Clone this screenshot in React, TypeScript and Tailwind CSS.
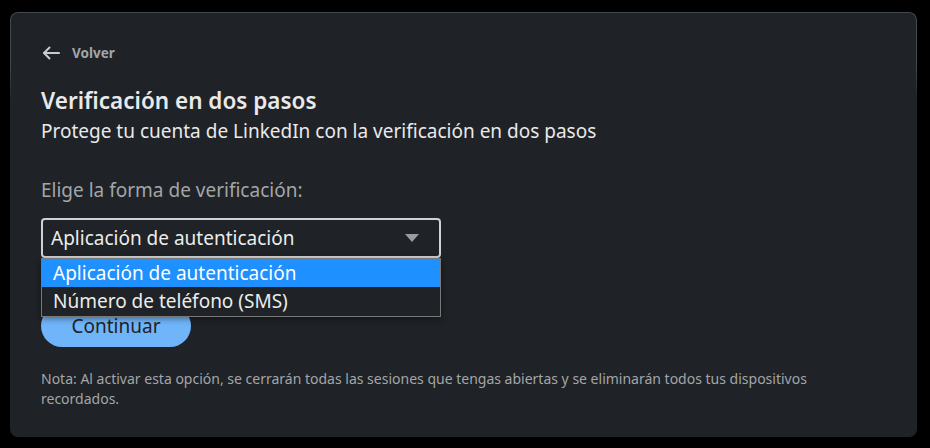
import React from "react";

export default function App() {
  return (
    <div className="w-[930px] h-[448px] bg-black pt-[12px] pl-[10px]" style={{ fontFamily: '"Noto Sans", "Open Sans", sans-serif' }}>
      <div className="relative w-[907px] h-[425px] bg-[#1f2226] rounded-[8px] pl-[31px] pr-[31px] pt-[31px]">
        <div className="pointer-events-none absolute inset-x-0 top-0 h-[90px] rounded-t-[8px] border-t border-x border-[#45484c] [mask-image:linear-gradient(to_bottom,black_60%,transparent)]" />
        <div className="flex items-center h-[20px] gap-[12px]">
          <svg width="18" height="14" viewBox="0 0 18 14" fill="none" stroke="#c9ccce" strokeWidth="2" strokeLinecap="round" strokeLinejoin="round" className="ml-[1px]">
            <path d="M17 7H2" />
            <path d="M7.5 1.5L2 7l5.5 5.5" />
          </svg>
          <span className="text-[13.5px] font-bold text-[#a3a6a9] leading-[20px]">Volver</span>
        </div>
        <h1 className="mt-[23px] text-[22.5px] font-semibold leading-[30px] text-[#e9e9ea]">Verificación en dos pasos</h1>
        <p className="mt-[2px] text-[19px] leading-[26px] text-[#e9e9ea]">Protege tu cuenta de LinkedIn con la verificación en dos pasos</p>
        <p className="mt-[33px] text-[19px] leading-[26px] text-[#a3a6a9]">Elige la forma de verificación:</p>
        <div className="relative mt-[15px] w-[400px]">
          <div className="flex items-center justify-between h-[40px] border-2 border-[#cfd1d3] rounded-[4px] pl-[8px] pr-[20px]">
            <span className="text-[19px] text-[#ececec]">Aplicación de autenticación</span>
            <svg width="14" height="8" viewBox="0 0 14 8"><path d="M0 0h14L7 8z" fill="#9a9c9e" /></svg>
          </div>
          <div className="absolute left-0 top-[40px] z-10 w-[400px] border border-[#76787a] bg-[#1f2226] shadow-[0_2px_6px_rgba(0,0,0,0.4)]">
            <div className="h-[28px] bg-[#1e90ff] pl-[11px] text-[19px] leading-[28px] text-white">Aplicación de autenticación</div>
            <div className="h-[29px] pl-[11px] text-[19px] leading-[29px] text-[#ececec]">Número de teléfono (SMS)</div>
          </div>
        </div>
        <button className="block mt-[47px] h-[42px] w-[150px] rounded-full bg-[#70b5f9] text-[19px] leading-[40px] text-[#1f2226]">Continuar</button>
        <p className="mt-[22px] w-[800px] text-[14px] leading-[20px] text-[#a3a6a9]">Nota: Al activar esta opción, se cerrarán todas las sesiones que tengas abiertas y se eliminarán todos tus dispositivos recordados.</p>
      </div>
    </div>
  );
}
